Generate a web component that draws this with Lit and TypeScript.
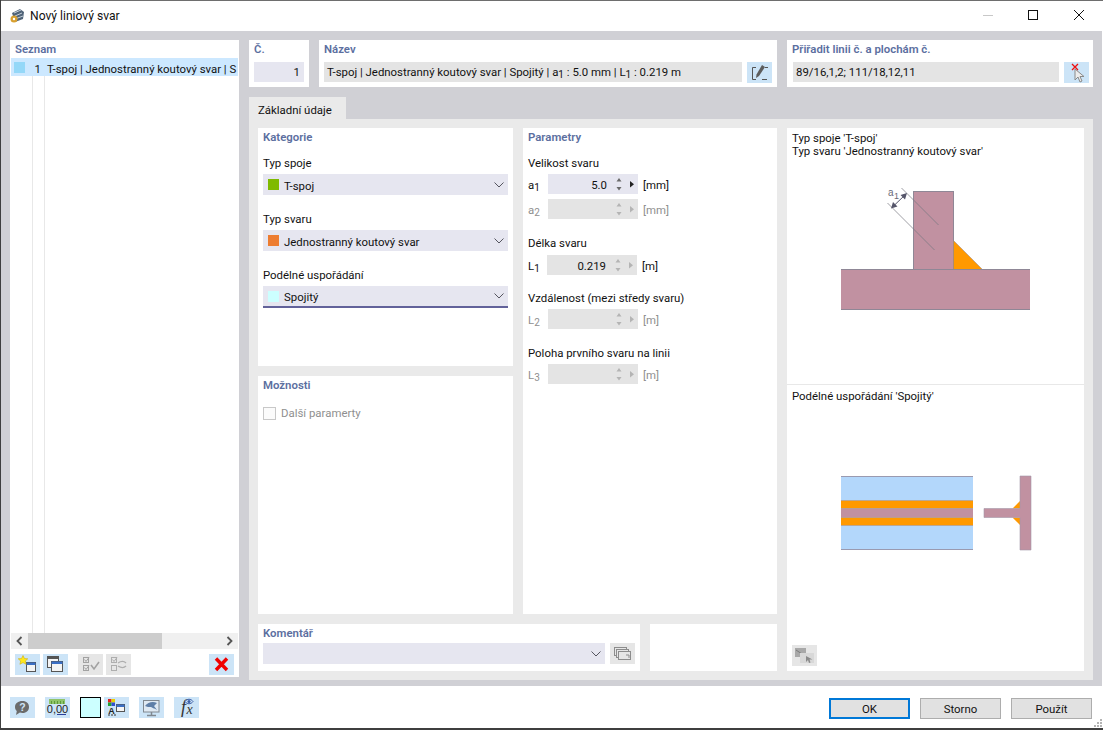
import { LitElement, html, css, svg } from 'lit';
import { customElement } from 'lit/decorators.js';

const chevron = html`<svg class="chev" width="10" height="6" viewBox="0 0 10 6"><path d="M.5.5L5 5 9.500.5" fill="none" stroke="#55555f" stroke-width="1"/></svg>`;

// toolbar icons, all on a 25x21 box
const icons: Record<string, unknown> = {
  newItem: svg`<rect x="11.500" y="8.500" width="9" height="9" fill="#f4f4f4" stroke="#555"/><rect x="11.500" y="8.500" width="9" height="2.500" fill="#3b6fc4"/><path d="M8 1.500l1.500 3 3.300.3-2.500 2.200.8 3.300-3.100-1.700-3.100 1.700.8-3.300-2.500-2.200 3.300-.3z" fill="#ffe81a" stroke="#c9a400" stroke-width=".5"/>`,
  copy: svg`<rect x="4.500" y="2.500" width="11" height="11" fill="#f4f4f4" stroke="#555"/><rect x="4.500" y="2.500" width="11" height="2.500" fill="#555"/><rect x="8.500" y="7.500" width="11" height="10" fill="#f4f4f4" stroke="#555"/><rect x="8.500" y="7.500" width="11" height="2.500" fill="#3b6fc4"/>`,
  checkAll: svg`<g fill="none" stroke="#a2a2a2"><rect x="5.500" y="3.500" width="5" height="5"/><rect x="5.500" y="11.500" width="5" height="5"/><path d="M6.500 5.500l1.500 2 3-4M6.500 13.500l1.500 2 3-4"/><path d="M13 11l3 4 5-7" stroke-width="1.600"/></g>`,
  checkSwap: svg`<g fill="none" stroke="#aeaeae"><rect x="5.500" y="3.500" width="5" height="5"/><rect x="5.500" y="11.500" width="5" height="5"/><path d="M6.500 5.500l1.500 2 3-4"/><path d="M12 9c3-2 6-2 8 0M12 12c3 2 6 2 8 0" stroke-width="1.400"/></g>`,
  remove: svg`<path d="M7 4.500l11 11.500M18 4.500L7 16" stroke="#f00000" stroke-width="3.400" fill="none"/>`,
  help: svg`<path d="M12.500 4c4 0 6.500 2.400 6.500 6s-2.500 6-6.500 6c-1 0-1.800-.1-2.600-.4L6 18l.8-4C5.600 12.900 5 11.600 5 10c0-3.600 3-6 7.500-6z" fill="#6b6b6b"/><text x="12.500" y="14" font-size="10.500" font-weight="700" text-anchor="middle" fill="#cfe5f8" font-family="Liberation Sans, sans-serif">?</text>`,
  units: svg`<rect x="4" y="2" width="16" height="5" fill="#8fc46a"/><path d="M6.500 4v3M9.500 4v3M12.500 4v3M15.500 4v3M18.500 4v3" stroke="#5d9a3a"/><text x="12.500" y="16" font-size="11" text-anchor="middle" fill="#222" font-family="Liberation Sans, sans-serif">0,00</text><path d="M12 17.500h9" stroke="#2a3f9a"/>`,
  legend: svg`<rect x="4" y="2" width="3.500" height="3.500" fill="#e02020"/><rect x="7.500" y="2" width="3.500" height="3.500" fill="#e8d000"/><rect x="4" y="5.500" width="3.500" height="3.500" fill="#20a030"/><rect x="7.500" y="5.500" width="3.500" height="3.500" fill="#3050d0"/><text x="7.500" y="16.500" font-size="9" font-weight="700" text-anchor="middle" fill="#222" font-family="Liberation Sans, sans-serif">A</text><path d="M4 18h2M7 18h2M10 18h2" stroke="#333"/><rect x="12.500" y="7.500" width="8" height="7" fill="#f4f4f4" stroke="#555"/><rect x="12.500" y="7.500" width="8" height="2.500" fill="#3b6fc4"/>`,
  display: svg`<rect x="4.500" y="3.500" width="15.500" height="11.500" fill="#dfe9f3" stroke="#808890"/><path d="M6 9c3-4 8-5 12-3l-3 3 3 4c-3-2-5-2-6-3-2 0-4 0-6-1z" fill="#5f7fa8"/><path d="M12.500 15v3M8 18.500h9" stroke="#808890" stroke-width="1.500"/>`,
  formula: svg`<text x="9.500" y="16" font-size="18" font-style="italic" text-anchor="middle" fill="#333" font-family="Liberation Serif, serif">f</text><text x="15.500" y="17" font-size="14" font-style="italic" text-anchor="middle" fill="#333" font-family="Liberation Serif, serif">x</text><path d="M11 4.500c2-3 6-3 8 0-2 3-6 3-8 0z" fill="#cfe5f8" stroke="#3b5fa8"/><circle cx="15" cy="4.500" r="1.600" fill="#3b5fa8"/>`,
  edit: svg`<path d="M9 5.500H5.500v12H9M15 17.500h5" fill="none" stroke="#555"/><path d="M15 3l3 2-6 9-3 2 .5-3.500z" fill="#5d5d5d"/><path d="M18 5.500h3" stroke="#555"/>`,
  pick: svg`<path d="M11 7v11l3-3 2 5 2-1-2-4.500h4z" fill="#ececec" stroke="#8a8a8a"/><path d="M8 2l6 6M14 2L8 8" stroke="#ee1010" stroke-width="1.300"/>`,
  library: svg`<g fill="#e6e6e6" stroke="#8c8c8c"><rect x="4.500" y="4.500" width="12" height="8"/><rect x="6.500" y="6.500" width="12" height="8"/><rect x="8.500" y="8.500" width="12" height="8"/></g><path d="M16 12h3v3" fill="none" stroke="#8c8c8c"/>`,
  render: svg`<rect x="3" y="3" width="11" height="9" fill="#a8a8a8"/><path d="M4 5l9 6" stroke="#7a7a7a"/><rect x="8" y="8" width="14" height="10" fill="#d8d8d8"/><path d="M14 11v6l2-2 1 3 1.500-.5-1-3h3z" fill="#8a8a8a"/>`,
};

function icon(name: string, cls = '') {
  return html`<button class="tool ${cls}"><svg width="25" height="21" viewBox="0 0 25 21">${icons[name]}</svg></button>`;
}

function spinner(value: string, off: boolean) {
  return html`<div class="spin ${off ? 'off' : ''}">
    <span class="val">${value}</span>
    <svg width="22" height="20" viewBox="0 0 22 20">
      <path d="M3.500 7.500L6 4l2.500 3.500zM3.500 13L6 16.500 8.500 13z"/>
      <path d="M17 7l4 3.200-4 3.200z" class="play"/>
    </svg>
  </div>`;
}

@customElement('app-root')
export class AppRoot extends LitElement {
  static styles = css`
    :host {
      display: block;
      width: 1103px;
      height: 730px;
      background: #3f3f3f;
      overflow: hidden;
      font-family: Roboto, 'Noto Sans', sans-serif;
      font-size: 11.400px;
      color: #111;
    }
    .window {
      position: relative;
      box-sizing: border-box;
      width: 1102px;
      height: 728px;
      margin-left: 1px;
      border-top: 1px solid #6e6e6e;
      background: #fff;
      display: flex;
      flex-direction: column;
    }
    .title {
      height: 30px;
      display: flex;
      align-items: center;
      padding-left: 8px;
      gap: 5px;
      font-size: 12.100px;
      flex: none;
    }
    .winbtns {
      margin-left: auto;
      display: flex;
    }
    .winbtns svg {
      display: block;
      width: 46px;
      height: 30px;
    }
    .main {
      flex: none;
      height: 655px;
      box-sizing: border-box;
      background: #d0d0d5;
      margin-right: 1px;
      padding: 9px 8px 6px 9px;
      display: grid;
      grid-template-columns: 229px 844px;
      gap: 10px;
      align-items: start;
    }
    .card {
      background: #fff;
      box-sizing: border-box;
    }
    .head {
      font-weight: 600;
      color: #5c6f9f;
      line-height: 16px;
      height: 16px;
    }
    .list {
      height: 637px;
      display: flex;
      flex-direction: column;
      padding: 1px 1px 2px 1px;
    }
    .list .head {
      padding-left: 4px;
    }
    .rows {
      flex: 1;
      margin-top: 1px;
      background:
        linear-gradient(#e8e8e8, #e8e8e8) 21px 0 / 1px 100% no-repeat,
        linear-gradient(#e8e8e8, #e8e8e8) 33px 0 / 1px 100% no-repeat;
    }
    .row {
      height: 18px;
      background: #cce8ff;
      display: flex;
      align-items: center;
      white-space: nowrap;
      overflow: hidden;
    }
    .row .sw {
      width: 11px;
      height: 11px;
      margin-left: 3px;
      background: #94d8f8;
      flex: none;
    }
    .row .no {
      width: 16px;
      text-align: right;
      flex: none;
      margin-top: 3px;
    }
    .row .tx {
      margin-left: 6px;
      margin-top: 3px;
    }
    .hscroll {
      height: 16px;
      background: #f0f0f0;
      display: flex;
      align-items: center;
      flex: none;
    }
    .hscroll .thumb {
      width: 134px;
      height: 100%;
      background: #cdcdcd;
      margin-left: 5px;
    }
    .hscroll svg {
      margin-left: 5px;
    }
    .hscroll svg:last-child {
      margin-left: auto;
      margin-right: 5px;
    }
    .listbar {
      display: flex;
      padding: 5px 4px 0 4px;
      height: 26px;
      box-sizing: border-box;
      flex: none;
    }
    .listbar .tool + .tool {
      margin-left: 3px;
    }
    .listbar .tool.gap {
      margin-left: 10px;
    }
    .listbar .tool.end {
      margin-left: auto;
    }
    .tool {
      width: 25px;
      height: 21px;
      border: 0;
      padding: 0;
      background: #cce4f7;
      display: block;
      flex: none;
    }
    .tool svg {
      display: block;
    }
    .tool.off {
      background: #e6e6e6;
    }
    .right {
      display: flex;
      flex-direction: column;
    }
    .top {
      display: flex;
      gap: 10px;
      height: 47px;
    }
    .top .card {
      padding: 0 5px;
    }
    .top .head {
      height: 22px;
      line-height: 19px;
    }
    .no-card {
      width: 60px;
    }
    .name-card {
      width: 458px;
    }
    .top .assign-card {
      width: 306px;
      padding: 0 4px 0 6px;
    }
    .assign-card .head {
      margin-left: -1px;
    }
    .line {
      display: flex;
      gap: 5px;
    }
    .input {
      height: 20px;
      line-height: 20px;
      background: #e4e4e4;
      padding: 0 3px;
      flex: 1;
      white-space: nowrap;
      overflow: hidden;
      min-width: 0;
    }
    .input.edit {
      background: #e6e6f0;
      text-align: right;
      padding-right: 4px;
    }
    .sub {
      font-size: 10px;
      vertical-align: -2px;
      line-height: 0;
    }
    .tabs {
      margin-top: 10px;
      height: 22px;
    }
    .tab {
      display: inline-block;
      height: 22px;
      width: 97px;
      box-sizing: border-box;
      background: #eaeaea;
      padding-left: 9px;
      line-height: 26px;
    }
    .page {
      background: #eaeaea;
      height: 561px;
      box-sizing: border-box;
      padding: 9px;
      display: grid;
      grid-template-columns: 519px 297px;
      gap: 10px;
    }
    .forms {
      display: flex;
      flex-direction: column;
      gap: 10px;
    }
    .cols {
      display: grid;
      grid-template-columns: 255px 254px;
      gap: 10px;
      height: 486px;
    }
    .stack {
      display: grid;
      grid-template-rows: 238px 238px;
      gap: 10px;
    }
    .group {
      padding: 1px 5px;
    }
    .field {
      line-height: 16px;
      margin-top: 10px;
      height: 16px;
    }
    .combo {
      height: 21px;
      margin: 3px 0 0 0;
      background: #e6e6f0;
      display: flex;
      align-items: center;
      padding-left: 5px;
      gap: 5px;
      box-sizing: border-box;
    }
    .combo .t {
      margin-top: 2px;
    }
    .combo + .field {
      margin-top: 16px;
    }
    .combo.focus {
      height: 22px;
      border-bottom: 2px solid #62629a;
    }
    .combo .sw {
      width: 11px;
      height: 11px;
      flex: none;
    }
    .chev {
      margin-left: auto;
      margin-right: 4px;
      flex: none;
    }
    .prow {
      height: 20px;
      margin-top: 3px;
      display: grid;
      grid-template-columns: 20px 90px auto;
      align-items: center;
    }
    .prow + .prow {
      margin-top: 5px;
    }
    .prow + .field {
      margin-top: 16px;
    }
    .prow.wide {
      margin-top: 4px;
      grid-template-columns: 19px 90px auto;
    }
    .prow.wide + .field {
      margin-top: 15px;
    }
    .prow .s,
    .prow .u {
      margin-top: 2px;
    }
    .prow .u {
      margin-left: 5px;
    }
    .prow.off {
      color: #8f8f8f;
    }
    .spin {
      height: 20px;
      background: #e6e6f0;
      display: flex;
      align-items: center;
      justify-content: flex-end;
      color: #111;
    }
    .spin .val {
      margin-top: 2px;
    }
    .spin.off {
      background: #e4e4e4;
    }
    .spin svg {
      display: block;
      flex: none;
      margin-right: 3px;
      margin-left: 6px;
    }
    .spin path {
      fill: #6a6a6a;
    }
    .spin .play {
      fill: #222;
    }
    .spin.off path {
      fill: #b4b4b4;
    }
    .check {
      display: flex;
      align-items: center;
      gap: 5px;
      color: #8f8f8f;
      margin-top: 12px;
      height: 16px;
    }
    .check i {
      display: block;
      width: 11px;
      height: 11px;
      border: 1px solid #c8c8c8;
      background: #fbfbfb;
    }
    .comments {
      display: grid;
      grid-template-columns: 382px 127px;
      gap: 10px;
      height: 47px;
    }
    .comments .card {
      padding: 1px 5px;
    }
    .comments .head {
      height: 18px;
    }
    .comments .combo {
      flex: 1;
      margin: 0;
    }
    .preview {
      display: flex;
      flex-direction: column;
      height: 543px;
      line-height: 13px;
    }
    .pv-top {
      height: 257px;
      flex: none;
      box-sizing: border-box;
      border-bottom: 1px solid #e8e8e8;
      padding-top: 4px;
    }
    .pv-top p,
    .pv-bottom p {
      margin: 0;
      padding-left: 5px;
    }
    .pv-text {
      height: 28px;
    }
    .pv-bottom {
      flex: 1;
      padding-top: 5px;
      display: flex;
      flex-direction: column;
    }
    .pv-bottom .cap {
      height: 75px;
    }
    .pv-bottom .tool {
      margin: auto 0 5px 5px;
    }
    svg.draw {
      display: block;
    }
    .foot {
      flex: 1;
      display: flex;
      align-items: flex-start;
      padding: 11px 11px 0 9px;
    }
    .foot .tool + .tool {
      margin-left: 10px;
    }
    .swatch {
      width: 21px;
      height: 21px;
      box-sizing: border-box;
      border: 1px solid #000;
      background: #ccffff;
      margin: 0 3px 0 10px;
      flex: none;
    }
    .swatch + .tool {
      margin-left: 0;
    }
    .btns {
      margin-left: auto;
      display: flex;
      gap: 10px;
      margin-top: 1px;
    }
    .btn {
      width: 81px;
      height: 21px;
      box-sizing: border-box;
      border: 1px solid #adadad;
      background: #e1e1e1;
      text-align: center;
      font: inherit;
      padding: 0;
      color: #111;
    }
    .btn.def {
      border: 2px solid #0078d7;
    }
    .grip {
      position: absolute;
      right: 0;
      bottom: 0;
    }
  `;

  render() {
    return html`<div class="window">
      <div class="title">
        <svg width="16" height="16" viewBox="0 0 16 16">
          <path d="M3 5l8-4 4 3-1 7-8 3z" fill="#4f6378"/>
          <path d="M5 5l7-3M6 8l7-3M6 11l8-3" stroke="#c6d0da" fill="none"/>
          <circle cx="5" cy="11" r="3.500" fill="#d8a030"/>
          <circle cx="5" cy="11" r="1.200" fill="#fff"/>
        </svg>
        <span>Nový liniový svar</span>
        <div class="winbtns">
          <svg viewBox="0 0 46 30"><path d="M18 14.500h10" stroke="#c8c8c8"/></svg>
          <svg viewBox="0 0 46 30"><rect x="17.500" y="9.500" width="9" height="9" fill="none" stroke="#111"/></svg>
          <svg viewBox="0 0 46 30"><path d="M17 9l10 10M27 9L17 19" stroke="#111" fill="none"/></svg>
        </div>
      </div>
      <div class="main">
        <div class="card list">
          <div class="head">Seznam</div>
          <div class="rows">
            <div class="row">
              <span class="sw"></span><span class="no">1</span>
              <span class="tx">T-spoj | Jednostranný koutový svar | S</span>
            </div>
          </div>
          <div class="hscroll">
            <svg width="7" height="10" viewBox="0 0 7 10"><path d="M5.500 1L1.500 5l4 4" fill="none" stroke="#555" stroke-width="1.800"/></svg>
            <div class="thumb"></div>
            <svg width="7" height="10" viewBox="0 0 7 10"><path d="M1.500 1l4 4-4 4" fill="none" stroke="#555" stroke-width="1.800"/></svg>
          </div>
          <div class="listbar">
            ${icon('newItem')}${icon('copy')}
            ${icon('checkAll', 'off gap')}${icon('checkSwap', 'off')}
            ${icon('remove', 'end')}
          </div>
        </div>
        <div class="right">
          <div class="top">
            <div class="card no-card">
              <div class="head">Č.</div>
              <div class="line"><div class="input edit">1</div></div>
            </div>
            <div class="card name-card">
              <div class="head">Název</div>
              <div class="line">
                <div class="input">T-spoj | Jednostranný koutový svar | Spojitý | a<span class="sub">1</span> : 5.0 mm | L<span class="sub">1</span> : 0.219 m</div>
                ${icon('edit')}
              </div>
            </div>
            <div class="card assign-card">
              <div class="head">Přiřadit linii č. a plochám č.</div>
              <div class="line">
                <div class="input">89/16,1,2; 111/18,12,11</div>
                ${icon('pick')}
              </div>
            </div>
          </div>
          <div class="tabs"><span class="tab">Základní údaje</span></div>
          <div class="page">
            <div class="forms">
              <div class="cols">
                <div class="stack">
                  <div class="card group">
                    <div class="head">Kategorie</div>
                    <div class="field">Typ spoje</div>
                    <div class="combo"><span class="sw" style="background:#7fba00"></span><span class="t">T-spoj</span>${chevron}</div>
                    <div class="field">Typ svaru</div>
                    <div class="combo"><span class="sw" style="background:#ed7d31"></span><span class="t">Jednostranný koutový svar</span>${chevron}</div>
                    <div class="field">Podélné uspořádání</div>
                    <div class="combo focus"><span class="sw" style="background:#ccffff"></span><span class="t">Spojitý</span>${chevron}</div>
                  </div>
                  <div class="card group">
                    <div class="head">Možnosti</div>
                    <div class="check"><i></i>Další paramerty</div>
                  </div>
                </div>
                <div class="card group">
                  <div class="head">Parametry</div>
                  <div class="field">Velikost svaru</div>
                  <div class="prow"><span class="s">a<span class="sub">1</span></span>${spinner('5.0', false)}<span class="u">[mm]</span></div>
                  <div class="prow off"><span class="s">a<span class="sub">2</span></span>${spinner('', true)}<span class="u">[mm]</span></div>
                  <div class="field">Délka svaru</div>
                  <div class="prow wide"><span class="s">L<span class="sub">1</span></span>${spinner('0.219', true)}<span class="u">[m]</span></div>
                  <div class="field">Vzdálenost (mezi středy svaru)</div>
                  <div class="prow off"><span class="s">L<span class="sub">2</span></span>${spinner('', true)}<span class="u">[m]</span></div>
                  <div class="field">Poloha prvního svaru na linii</div>
                  <div class="prow off"><span class="s">L<span class="sub">3</span></span>${spinner('', true)}<span class="u">[m]</span></div>
                </div>
              </div>
              <div class="comments">
                <div class="card">
                  <div class="head">Komentář</div>
                  <div class="line">
                    <div class="combo">${chevron}</div>
                    ${icon('library', 'off')}
                  </div>
                </div>
                <div class="card"></div>
              </div>
            </div>
            <div class="card preview">
              <div class="pv-top">
                <div class="pv-text">
                  <p>Typ spoje 'T-spoj'</p>
                  <p>Typ svaru 'Jednostranný koutový svar'</p>
                </div>
                <svg class="draw" width="297" height="160" viewBox="787 160 297 160">
                  <rect x="913.500" y="191.500" width="40" height="78" fill="#c191a1" stroke="#8f8796"/>
                  <path d="M953.500 240.500L982.500 269.500H953.500z" fill="#ff9900" stroke="#8f8796" stroke-width=".5"/>
                  <rect x="841" y="269.500" width="189" height="40" fill="#c191a1"/>
                  <path d="M841 269.500h189M841 309.500h189" stroke="#8f8796"/>
                  <path d="M901.500 188L938.500 225M887.500 203L934.500 250" stroke="#77777f" stroke-width=".7"/>
                  <path d="M906 194l-14 13.500" stroke="#55556a"/>
                  <path d="M907 193l-6.500 2 4.500 4.500zM891 208.500l6.500-2-4.500-4.500z" fill="#55556a"/>
                  <text x="888" y="196" font-size="10" fill="#6a6a78" font-family="Liberation Sans, sans-serif">a</text>
                  <text x="894" y="199" font-size="9" fill="#6a6a78" font-family="Liberation Sans, sans-serif">1</text>
                </svg>
              </div>
              <div class="pv-bottom">
                <p class="cap">Podélné uspořádání 'Spojitý'</p>
                <svg class="draw" width="297" height="100" viewBox="787 465 297 100">
                  <rect x="841" y="476" width="132" height="74" fill="#b3d7fb"/>
                  <path d="M841 476.500h132M841 549.500h132" stroke="#9a9ab0"/>
                  <rect x="841" y="500.500" width="132" height="8" fill="#ff9900"/>
                  <rect x="841" y="508.500" width="132" height="9" fill="#c191a1"/>
                  <rect x="841" y="517.500" width="132" height="8" fill="#ff9900"/>
                  <path d="M841 500.500h132M841 508.500h132M841 517.500h132M841 525.500h132" stroke="#a89aa0" stroke-width=".6"/>
                  <path d="M1020 501v7.500h-7.500zM1020 525v-7.500h-7.500z" fill="#ff9900"/>
                  <path d="M1020 476h11v74h-11v-32.500h-36v-9h36z" fill="#c191a1" stroke="#a397a8" stroke-width=".6"/>
                </svg>
                ${icon('render', 'off')}
              </div>
            </div>
          </div>
        </div>
      </div>
      <div class="foot">
        ${icon('help')}${icon('units')}
        <div class="swatch"></div>
        ${icon('legend')}${icon('display')}${icon('formula')}
        <div class="btns">
          <button class="btn def">OK</button>
          <button class="btn">Storno</button>
          <button class="btn">Použít</button>
        </div>
      </div>
      <svg class="grip" width="9" height="9" viewBox="0 0 9 9" fill="#b4b4b4">
        <rect x="6" y="0" width="2" height="2"/><rect x="3" y="3" width="2" height="2"/><rect x="6" y="3" width="2" height="2"/>
        <rect x="0" y="6" width="2" height="2"/><rect x="3" y="6" width="2" height="2"/><rect x="6" y="6" width="2" height="2"/>
      </svg>
    </div>`;
  }
}
